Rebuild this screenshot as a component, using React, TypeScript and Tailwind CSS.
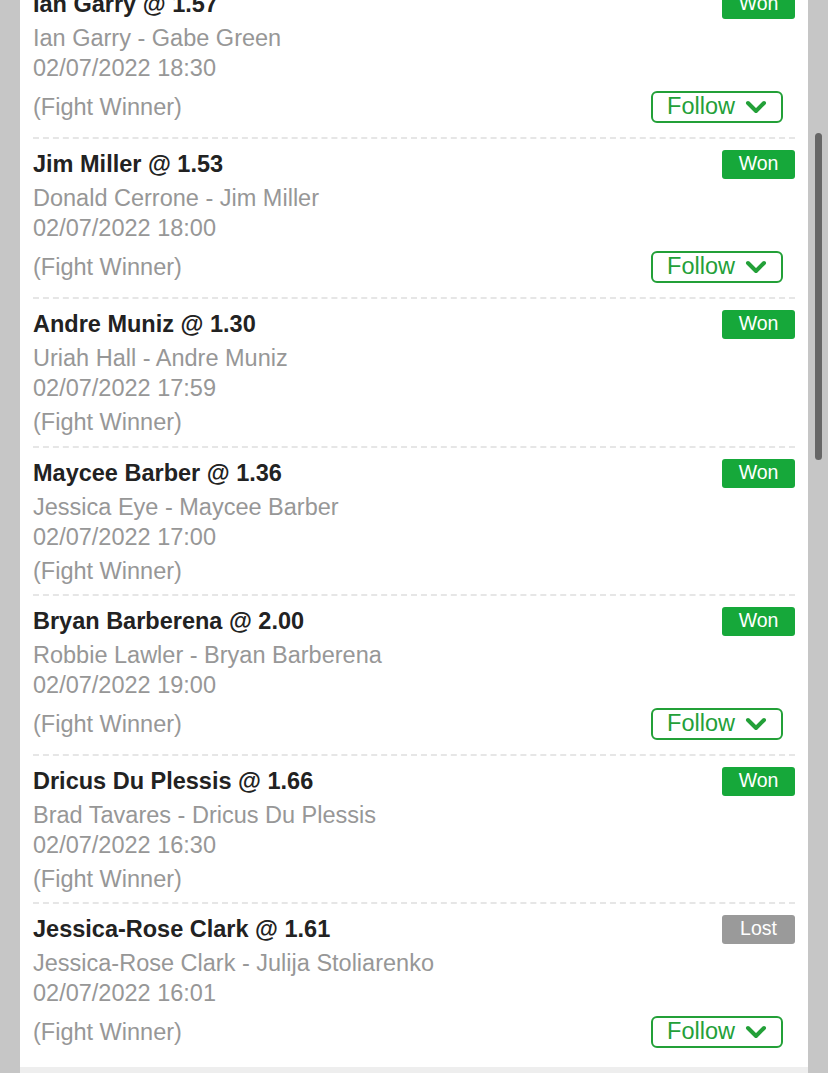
import React from "react";

type Bet = {
  pick: string;
  match: string;
  date: string;
  result: "Won" | "Lost";
  follow: boolean;
  extra?: boolean;
};

const bets: Bet[] = [
  { pick: "Ian Garry @ 1.57", match: "Ian Garry - Gabe Green", date: "02/07/2022 18:30", result: "Won", follow: true },
  { pick: "Jim Miller @ 1.53", match: "Donald Cerrone - Jim Miller", date: "02/07/2022 18:00", result: "Won", follow: true },
  { pick: "Andre Muniz @ 1.30", match: "Uriah Hall - Andre Muniz", date: "02/07/2022 17:59", result: "Won", follow: false, extra: true },
  { pick: "Maycee Barber @ 1.36", match: "Jessica Eye - Maycee Barber", date: "02/07/2022 17:00", result: "Won", follow: false },
  { pick: "Bryan Barberena @ 2.00", match: "Robbie Lawler - Bryan Barberena", date: "02/07/2022 19:00", result: "Won", follow: true },
  { pick: "Dricus Du Plessis @ 1.66", match: "Brad Tavares - Dricus Du Plessis", date: "02/07/2022 16:30", result: "Won", follow: false },
  { pick: "Jessica-Rose Clark @ 1.61", match: "Jessica-Rose Clark - Julija Stoliarenko", date: "02/07/2022 16:01", result: "Lost", follow: true },
];

function Chevron() {
  return (
    <svg width="22" height="14" viewBox="0 0 22 14" fill="none">
      <path d="M3 3 L11 11 L19 3" stroke="#23a038" strokeWidth="4" strokeLinecap="round" strokeLinejoin="round" />
    </svg>
  );
}

function Row({ bet, first }: { bet: Bet; first: boolean }) {
  const pb = bet.follow ? "pb-[14px]" : bet.extra ? "pb-[9px]" : "pb-[8px]";
  return (
    <div className={`mx-[13px] ${first ? "" : "border-t-2 border-dashed border-[#e6e6e6]"} pt-[10px] ${pb}`}>
      <div className="flex items-center justify-between h-[30px]">
        <div className="text-[23.5px] leading-[30px] font-bold text-[#222222]">{bet.pick}</div>
        <div
          className={`h-[29px] w-[73px] flex items-center justify-center rounded-[3px] text-[19.5px] text-white ${
            bet.result === "Won" ? "bg-[#16a83a]" : "bg-[#9a9a9a]"
          }`}
        >
          {bet.result}
        </div>
      </div>
      <div className="mt-[4px] text-[23.5px] leading-[30px] text-[#979797]">{bet.match}</div>
      <div className="text-[23.5px] leading-[30px] text-[#979797]">{bet.date}</div>
      {bet.follow ? (
        <div className="mt-[8px] flex items-center justify-between h-[32px]">
          <div className="text-[23.5px] leading-[30px] text-[#979797]">(Fight Winner)</div>
          <div className="mr-[12px] h-[32px] w-[132px] rounded-[6px] border-2 border-[#23a038] flex items-center justify-center gap-[10px] text-[23.5px] text-[#23a038]">
            <span className="leading-none">Follow</span>
            <Chevron />
          </div>
        </div>
      ) : (
        <div className="mt-[4px] text-[23.5px] leading-[30px] text-[#979797]">(Fight Winner)</div>
      )}
    </div>
  );
}

export default function App() {
  return (
    <div
      className="relative w-[828px] h-[1073px] overflow-hidden bg-[#c6c6c6] px-[20px]"
      style={{ fontFamily: '"Liberation Sans", Arial, sans-serif' }}
    >
      <div className="bg-white -mt-[21px]">
        {bets.map((b, i) => (
          <Row key={i} bet={b} first={i === 0} />
        ))}
        <div className="h-[5px]" />
      </div>
      <div className="bg-[#eeeeee] h-[40px]" />
      <div className="absolute left-[815px] top-[133px] w-[7px] h-[327px] rounded-full bg-[#666666]" />
    </div>
  );
}
